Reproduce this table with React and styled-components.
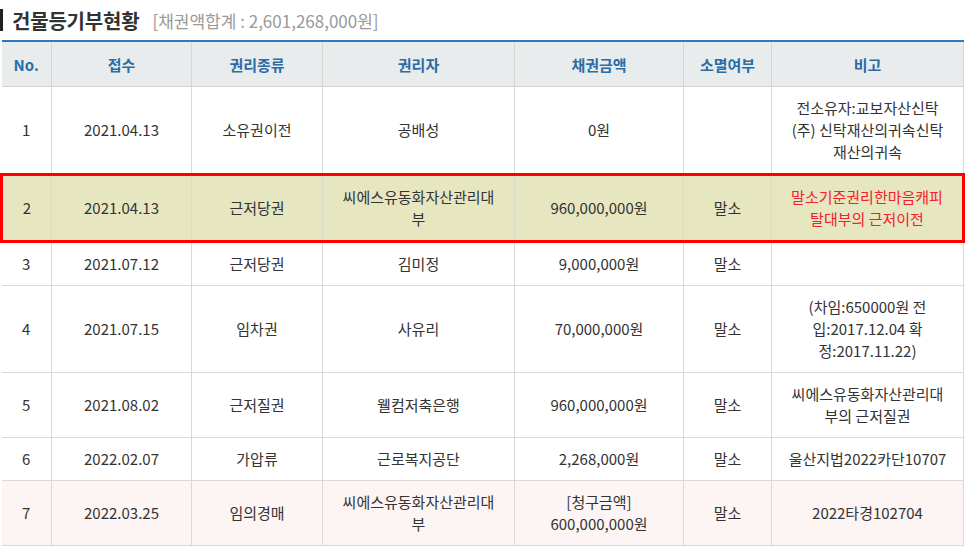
import React from "react";
import styled, { createGlobalStyle, css } from "styled-components";

const Global = createGlobalStyle`
  html, body { margin: 0; padding: 0; background: #fff; }
  body { font-family: "Noto Sans CJK KR", "Noto Sans", sans-serif; color: #333; }
`;

const Wrap = styled.div`
  width: 966px;
`;

const TitleRow = styled.div`
  display: flex;
  align-items: center;
  height: 40px;
`;

const Bar = styled.span`
  width: 3px;
  height: 22px;
  background: #222;
  margin-right: 9px;
`;

const Title = styled.h2`
  margin: 0;
  font-size: 20px;
  font-weight: 700;
  color: #333;
  letter-spacing: -0.2px;
`;

const Sum = styled.span`
  margin-left: 13px;
  font-size: 17px;
  color: #9a9a9a;
`;

const Table = styled.table`
  width: 962px;
  border-collapse: collapse;
  table-layout: fixed;
  border-top: 2px solid #2e79b9;
  font-size: 15px;
`;

const Th = styled.th`
  height: 44px;
  padding: 0;
  background: #e9ecec;
  color: #2a6ca6;
  font-weight: 700;
  font-size: 15px;
  border-left: 1px solid #d6d6d6;
  border-right: 1px solid #d6d6d6;
  border-bottom: 1px solid #d0d0d0;
  &:first-child { border-left: none; }
`;

const Tr = styled.tr`
  background: ${(p) => (p.$tone === "hl" ? "#e6e6c1" : p.$tone === "pink" ? "#fdf4f4" : "#fff")};
  ${(p) =>
    p.$tone === "hl" &&
    css`
      & > td {
        border-top: 3px solid #f00;
        border-bottom: 3px solid #f00;
      }
      & > td:first-child { border-left: 3px solid #f00; }
      & > td:last-child { border-right: 3px solid #f00; }
    `}
`;

const Td = styled.td`
  padding: 10px 8px 10px;
  line-height: 22px;
  text-align: center;
  vertical-align: middle;
  color: ${(p) => (p.$red ? "#f0222b" : "#333")};
  border: 1px solid #d9d9d9;
  &:first-child { border-left: none; }
`;

const cols = [50, 140, 131, 192, 169, 88, 192];
const heads = ["No.", "접수", "권리종류", "권리자", "채권금액", "소멸여부", "비고"];

const rows = [
  { no: "1", date: "2021.04.13", kind: "소유권이전", who: ["공배성"], amt: ["0원"], gone: "", note: ["전소유자:교보자산신탁", "(주) 신탁재산의귀속신탁", "재산의귀속"] },
  { no: "2", date: "2021.04.13", kind: "근저당권", who: ["씨에스유동화자산관리대", "부"], amt: ["960,000,000원"], gone: "말소", note: ["말소기준권리한마음캐피", "탈대부의 근저이전"], tone: "hl", red: true },
  { no: "3", date: "2021.07.12", kind: "근저당권", who: ["김미정"], amt: ["9,000,000원"], gone: "말소", note: [] },
  { no: "4", date: "2021.07.15", kind: "임차권", who: ["사유리"], amt: ["70,000,000원"], gone: "말소", note: ["(차임:650000원 전", "입:2017.12.04 확", "정:2017.11.22)"] },
  { no: "5", date: "2021.08.02", kind: "근저질권", who: ["웰컴저축은행"], amt: ["960,000,000원"], gone: "말소", note: ["씨에스유동화자산관리대", "부의 근저질권"] },
  { no: "6", date: "2022.02.07", kind: "가압류", who: ["근로복지공단"], amt: ["2,268,000원"], gone: "말소", note: ["울산지법2022카단10707"] },
  { no: "7", date: "2022.03.25", kind: "임의경매", who: ["씨에스유동화자산관리대", "부"], amt: ["[청구금액]", "600,000,000원"], gone: "말소", note: ["2022타경102704"], tone: "pink" },
];

const Lines = ({ items }) =>
  items.map((t, i) => (
    <React.Fragment key={i}>
      {i > 0 && <br />}
      {t}
    </React.Fragment>
  ));

export default function App() {
  return (
    <Wrap>
      <Global />
      <TitleRow>
        <Bar />
        <Title>건물등기부현황</Title>
        <Sum>[채권액합계 : 2,601,268,000원]</Sum>
      </TitleRow>
      <Table>
        <colgroup>
          {cols.map((w, i) => (
            <col key={i} style={{ width: w }} />
          ))}
        </colgroup>
        <thead>
          <tr>
            {heads.map((h) => (
              <Th key={h}>{h}</Th>
            ))}
          </tr>
        </thead>
        <tbody>
          {rows.map((r) => (
            <Tr key={r.no} $tone={r.tone}>
              <Td>{r.no}</Td>
              <Td>{r.date}</Td>
              <Td>{r.kind}</Td>
              <Td><Lines items={r.who} /></Td>
              <Td><Lines items={r.amt} /></Td>
              <Td>{r.gone}</Td>
              <Td $red={r.red}><Lines items={r.note} /></Td>
            </Tr>
          ))}
        </tbody>
      </Table>
    </Wrap>
  );
}
